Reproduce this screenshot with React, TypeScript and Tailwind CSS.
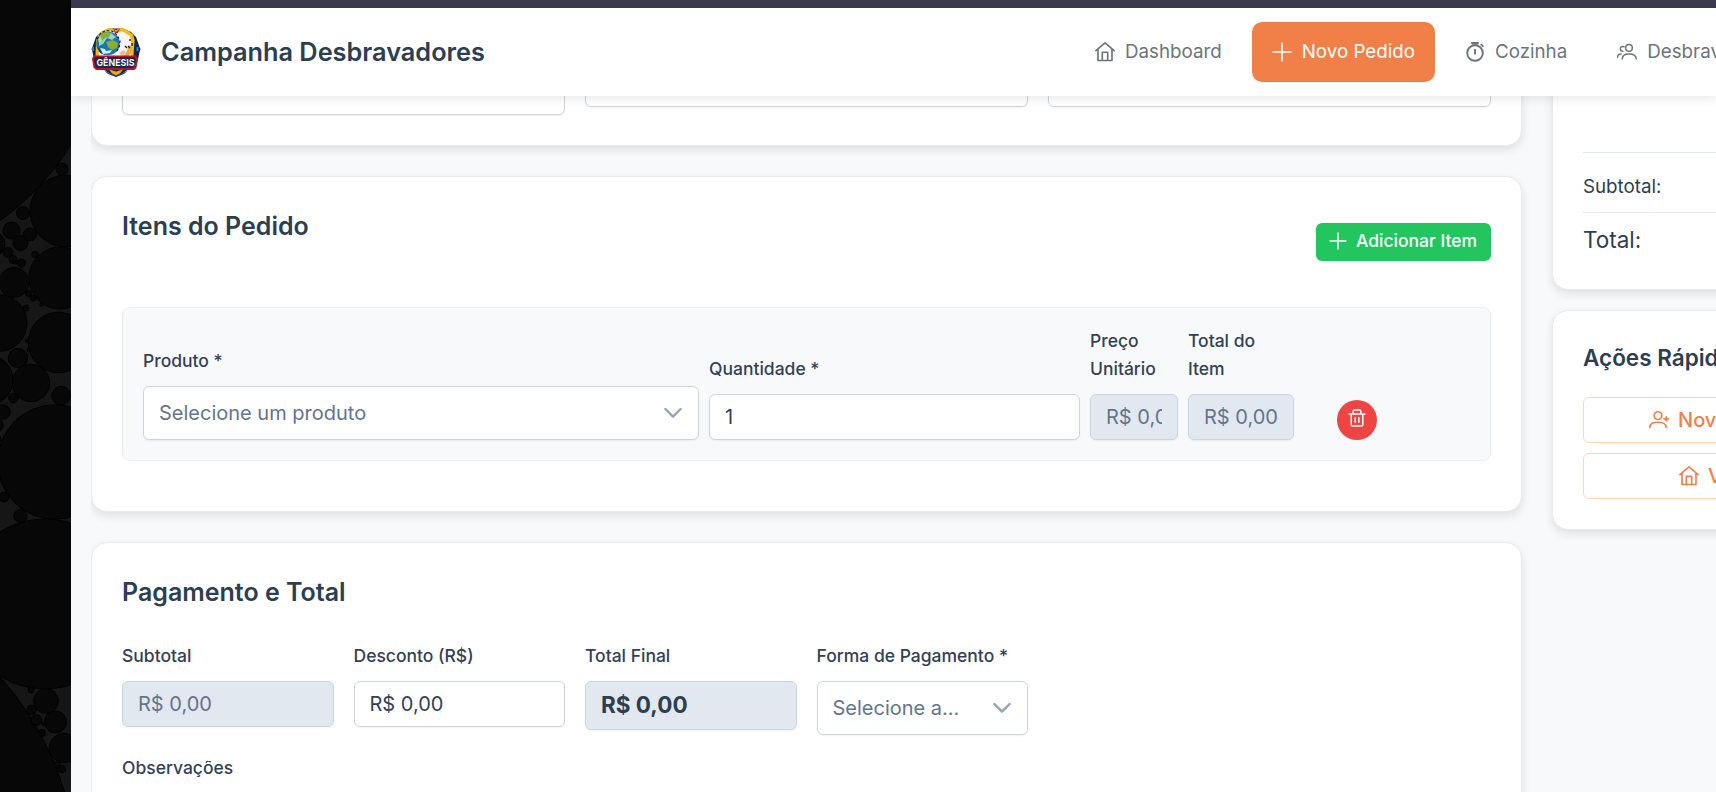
import React from "react";

const font = "font-['Inter',sans-serif]";

type IconProps = { className?: string };

function Svg({ className = "h-5 w-5", sw = 1.65, children }: IconProps & { sw?: number; children: React.ReactNode }) {
  return (
    <svg viewBox="0 0 20 20" fill="none" stroke="currentColor" strokeWidth={sw} strokeLinecap="round" strokeLinejoin="round" className={`shrink-0 ${className}`}>
      {children}
    </svg>
  );
}
const Home = ({ className }: IconProps) => (
  <Svg className={className}>
    <path d="M.9 8.6 10 .9l9.1 7.700M3 7.100v11.400h14V7.100M7.300 18.300v-8.100h5.400v8.100" />
  </Svg>
);
const Plus = ({ className }: IconProps) => (
  <Svg className={className}>
    <path d="M10 1.200v17.600M1.200 10h17.600" />
  </Svg>
);
const Stopwatch = ({ className }: IconProps) => (
  <Svg className={className} sw={1.9}>
    <circle cx="10" cy="11" r="7.800" />
    <path d="M10 7.700v4M7 .9h6M7.400 1.800h5.200M16.300 2.600l1.500 1.500" />
  </Svg>
);
const Users = ({ className }: IconProps) => (
  <Svg className={className} sw={1.5}>
    <circle cx="12" cy="5.900" r="3.300" />
    <path d="M5.200 17c0-3.500 2.600-5.100 6.800-5.100s7.200 1.600 7.200 5.100M7 4.700c-2.400-.6-3.600.5-3.600 2.200 0 1.400.9 2.200 2.300 2.400M.6 15.200c0-2 1.400-3.200 3.600-3.300" />
  </Svg>
);
const UserPlus = ({ className }: IconProps) => (
  <Svg className={className}>
    <circle cx="9" cy="5.600" r="3.900" />
    <path d="M.8 17.400c0-3.400 2.800-5.200 8.200-5.200s8.200 1.800 8.200 5.200M17.200 6.700v4.400M15 8.900h4.400" />
  </Svg>
);
const Trash = ({ className }: IconProps) => (
  <Svg className={className} sw={1.7}>
    <path d="M1.200 5.600h17.600M3.600 5.600v11.800c0 .9.5 1.400 1.400 1.400h10c.9 0 1.400-.5 1.400-1.400V5.600M5.800 5.400V2.600c0-.9.5-1.400 1.400-1.400h5.600c.9 0 1.400.5 1.400 1.400v2.800M8 9.600v5M12 9.600v5" />
  </Svg>
);
const Chevron = () => (
  <svg viewBox="0 0 18 18" fill="none" stroke="#94a3b8" strokeWidth="2.400" strokeLinecap="round" strokeLinejoin="round" className="mr-px h-[18px] w-[18px] shrink-0">
    <path d="M1.400 5 9 12.600 16.600 5" />
  </svg>
);

function Logo() {
  return (
    <svg viewBox="0 0 50 50" className="h-[50px] w-[50px] shrink-0">
      <path d="M18 1.500 10 5 5 10 2.500 17 1.500 20 .5 22l1 3 1 5 3 12 8 1 6 4 5.500 3 5.500-3 6-4 8-1 3-12 1-5 1-3-1-2-1-3-2.500-7-5-5-8-3.500z" fill="#132347" />
      <path d="M25 3 19 .5 12 3.500 7.500 7 5 14l-.5 15h40L44 14 42 7.500 37 3.500 30 .5z" fill="#f7b719" />
      <path d="M25 6 20 4.500 12 6 8 13v16h32l.5-12L39 9 31 4z" fill="#f8f5f4" />
      <path d="m22 1 3 4 4-4-2 5h-3z" fill="#c8202b" />
      <path d="M43.500 13l2.500 8-1 8h-2.500z" fill="#16264d" />
      <path d="M1 20h2v4H1zM45.500 20h2v4h-2z" fill="#2f7fc4" />
      <circle cx="17" cy="16.500" r="11.800" fill="#1a75b5" />
      <path d="M8 10q4-6 12-4l5 4-4 3-5-2-4 6-4 2z" fill="#8fd3dc" />
      <path d="M10 8l5-3 5 1-2 4-4 1-4 4zM15 15l7-2 5 3-1 5-5 2-4-3z" fill="#8cae2d" />
      <path d="M7 12l3-2 1 4-3 2z" fill="#c9dd62" />
      <path d="M6 20l5 3 4 1-1 4-5-2z" fill="#0e3f7e" />
      <path d="m9 21 5 1 1 2 6-1-2 3-7 1z" fill="#d5eef4" />
      <path d="M6 12l4-6 5-2.500 6 .5 5 4 3 6-1 7-3 4" fill="none" stroke="#0e1c3a" strokeWidth="1.100" strokeDasharray="2.500 2" />
      <path d="m35 26 2-5 2-3 2.500 3-1 5-3 3h-5z" fill="#e8ae3b" />
      <path d="m28 26 5-3 2 3-4 3z" fill="#f0b69e" />
      <path d="M39 12v2m2 2v3m-4 0 2 2m-5-2 2 2" stroke="#15151d" strokeWidth="1.300" />
      <path d="M3 28.500h42l2 3-1.500 9-2.500 2.500H5l-2.500-2.500L1 31.500z" fill="#b4161f" />
      <path d="M4.500 30h39l1.500 2-1.500 7.500-1.500 1.500H6l-1.500-1.500L3 32z" fill="#172a4b" />
      <path d="m13 43.500 12 5.500 12-5.500-4 3.500-8 3-8-3z" fill="#1a4a8c" />
      <path d="m18 42.500 7 2 7-2-3 4-4 2-4-2z" fill="#f4a01a" />
      <text x="24.500" y="39.200" textAnchor="middle" textLength="38" lengthAdjust="spacingAndGlyphs" className="font-['Inter',sans-serif] text-[9.5px] font-bold" fill="#eef4fb">GÊNESIS</text>
    </svg>
  );
}

const bubbles: [number, number, number][] = [
  [-153, 7, 263], [62, 169, 6], [66, 211, 36], [23, 213, 6.5], [11.5, 230.5, 8.5], [20.5, 243, 7.5], [30, 234.5, 6.5],
  [-7, 244, 12], [8, 252.5, 5], [13, 259.5, 4], [21.5, 263, 4], [16, 262.5, 1.5], [35, 254.5, 3.3], [60, 278, 31], [14, 282.5, 15],
  [28.5, 293.5, 3], [33, 298, 3], [41.5, 304.5, 1.7], [26, 308, 3], [-1.5, 323, 28.5], [58.5, 342.5, 30.3], [27, 340.5, 1.5],
  [28.5, 350, 1.5], [18, 358, 9.7], [-12, 380, 25], [31, 383, 18.7], [61, 395.5, 9.3], [13.5, 398, 4.8],
  [3, 412, 7.2], [-4, 425, 7], [-3, 439, 4], [55, 462, 57.3], [-2, 478, 3], [4, 497, 5], [20.5, 516, 6.6], [45, 604, 85],
  [-231, 882, 309], [31, 690, 3], [46, 701, 12.4], [31.5, 710, 4.7], [36.5, 720, 5.5], [55.5, 722, 11], [42, 733, 3.5],
  [64, 748, 14.7], [57.5, 765, 3.3], [62, 769, 3.7], [43.5, 724, 1.5],
];

const navItem = "flex items-center gap-[10px] rounded-[10px] px-5 h-[60px] text-[18.75px] whitespace-nowrap";
const label = "text-[17.5px] font-medium leading-[28px] text-[#334155]";
const inputBase = "flex items-center rounded-md border border-[#cbd5e1] px-[15px] leading-none shadow-[0_1px_2px_rgba(18,18,23,0.05)] overflow-hidden";
const card = "rounded-2xl border border-[#e9ecef] bg-white shadow-[0_4px_10px_rgba(0,0,0,0.1)]";
const heading = "text-[25px] font-semibold leading-[30px] text-[#2c3e50]";

function Readonly() {
  return (
    <div className={`${inputBase} h-[46px] bg-[#e2e8f0] text-[20px] text-[#64748b]`}>
      <span className="min-w-0 overflow-hidden whitespace-nowrap leading-[30px]">R$ 0,00</span>
    </div>
  );
}

export default function App() {
  return (
    <div className={`${font} flex h-[792px] w-[1716px] overflow-hidden bg-[#f8f9fb]`}>
      <aside className="h-full w-[71px] shrink-0 bg-[#161616]">
        <svg viewBox="0 0 71 792" className="h-full w-full">
          {bubbles.map(([cx, cy, r], i) => (
            <circle key={i} cx={cx} cy={cy} r={r} fill="#070707" stroke="#000" strokeWidth="0.9" />
          ))}
        </svg>
      </aside>

      <div className="flex min-w-0 flex-1 flex-col">
        <div className="h-2 shrink-0 bg-[#3b3b4f]" />
        <header className="relative z-10 flex h-[88px] shrink-0 items-center bg-white pl-5 shadow-[0_2px_10px_rgba(0,0,0,0.1)]">
          <Logo />
          <h1 className="ml-5 w-[914px] shrink-0 text-[25.3px] font-semibold text-[#2c3e50]">Campanha Desbravadores</h1>
          <nav className="flex shrink-0 gap-[10px] text-[#6c757d]">
            <a className={navItem}><Home /><span>Dashboard</span></a>
            <a className={`${navItem} bg-[#f08048] text-white`}><Plus /><span>Novo Pedido</span></a>
            <a className={navItem}><Stopwatch /><span>Cozinha</span></a>
            <a className={navItem}><Users /><span>Desbravadores</span></a>
          </nav>
        </header>

        <main className="flex min-h-0 flex-1 gap-[30px] overflow-hidden pl-5">
          <div className="flex w-[1431px] shrink-0 flex-col gap-[30px] [clip-path:inset(-50px_-30px_0_0)]">
            <section className={`${card} -mt-10 grid h-[90px] shrink-0 grid-cols-3 items-start gap-5 px-[30px]`}>
              <div className="h-[58px] rounded-md border border-[#cbd5e1] shadow-[0_1px_2px_rgba(18,18,23,0.05)]" />
              <div className="h-[50px] rounded-md border border-[#cbd5e1] shadow-[0_1px_2px_rgba(18,18,23,0.05)]" />
              <div className="h-[50px] rounded-md border border-[#cbd5e1] shadow-[0_1px_2px_rgba(18,18,23,0.05)]" />
            </section>

            <section className={`${card} h-[336px] shrink-0 px-[30px] pt-[34px]`}>
              <div className="flex h-[96px] items-start justify-between">
                <h2 className={heading}>Itens do Pedido</h2>
                <button className="mt-[12px] flex h-[38px] w-[175px] items-center gap-[9px] whitespace-nowrap rounded-md bg-[#22c55e] pb-[2px] pl-[13px] text-[17.5px] font-medium text-white">
                  <Plus className="h-[18px] w-[18px]" />Adicionar Item
                </button>
              </div>
              <div className="flex h-[154px] items-end gap-[10px] rounded-lg border border-[#e9ecef] bg-[#f8f9fb] p-5">
                <div className="w-[556px]">
                  <div className={`${label} mb-[11px]`}>Produto *</div>
                  <div className={`${inputBase} h-[54px] justify-between bg-white text-[20px] text-[#64748b]`}>
                    <span className="leading-[30px]">Selecione um produto</span>
                    <Chevron />
                  </div>
                </div>
                <div className="w-[371px]">
                  <div className={`${label} mb-[11px]`}>Quantidade *</div>
                  <div className={`${inputBase} h-[46px] bg-white text-[20px] text-[#334155]`}>1</div>
                </div>
                <div className="w-[88px]">
                  <div className={`${label} mb-[11px]`}>Preço Unitário</div>
                  <Readonly />
                </div>
                <div className="w-[106px]">
                  <div className={`${label} mb-[11px] w-20`}>Total do Item</div>
                  <Readonly />
                </div>
                <button className="ml-[33px] flex h-10 w-10 items-start justify-center rounded-full bg-[#ef4444] pt-[9px] text-white">
                  <Trash className="h-[18px] w-[18px]" />
                </button>
              </div>
            </section>

            <section className={`${card} h-[400px] shrink-0 px-[30px] pt-[34px]`}>
              <h2 className={heading}>Pagamento e Total</h2>
              <div className="mt-[35px] grid w-[906px] grid-cols-4 gap-5">
                <div>
                  <div className={`${label} mb-[11px]`}>Subtotal</div>
                  <Readonly />
                </div>
                <div>
                  <div className={`${label} mb-[11px]`}>Desconto (R$)</div>
                  <div className={`${inputBase} h-[46px] bg-white text-[20px] text-[#334155]`}>R$ 0,00</div>
                </div>
                <div>
                  <div className={`${label} mb-[11px]`}>Total Final</div>
                  <div className={`${inputBase} h-[49px] bg-[#e2e8f0] text-[22.5px] font-bold text-[#2c3e50]`}>R$ 0,00</div>
                </div>
                <div>
                  <div className={`${label} mb-[11px] whitespace-nowrap`}>Forma de Pagamento *</div>
                  <div className={`${inputBase} h-[54px] justify-between bg-white text-[20px] text-[#64748b]`}>
                    <span className="leading-[30px]">Selecione a...</span>
                    <Chevron />
                  </div>
                </div>
              </div>
              <div className={`${label} mt-[19px]`}>Observações</div>
            </section>
          </div>

          <div className="flex w-[460px] shrink-0 flex-col gap-5">
            <section className={`${card} -mt-10 h-[234px] shrink-0 px-[30px] pt-[95px] text-[#2c3e50]`}>
              <div className="flex h-[61px] items-center border-y border-[#e2e8f0] pt-[10px] text-[18.75px]">Subtotal:</div>
              <div className="pt-3 text-[22.5px] leading-[30px]">Total:</div>
            </section>
            <section className={`${card} h-[220px] shrink-0 px-[30px] pt-[32px]`}>
              <h2 className="text-[22.5px] font-semibold leading-[30px] text-[#2c3e50]">Ações Rápidas</h2>
              <div className="mt-6 flex flex-col gap-[10px] text-[20px] font-medium text-[#f08048]">
                <button className="flex h-[46px] items-center gap-[9px] rounded-md border border-[#fbd5bd] pl-[65px]"><UserPlus />Novo Desbravador</button>
                <button className="flex h-[46px] items-center gap-[9px] rounded-md border border-[#fbd5bd] pl-[95px]"><Home />Voltar ao Dashboard</button>
              </div>
            </section>
          </div>
        </main>
      </div>
    </div>
  );
}
